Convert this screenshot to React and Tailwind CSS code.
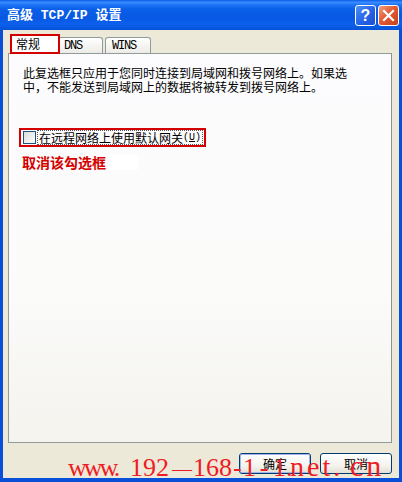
import React from "react";

function TitleButton({ kind }) {
    if (kind === "help") {
        return (
            <div className="w-[21px] h-[21px] rounded-[3px] border border-white bg-[linear-gradient(135deg,#4f8ff7_0%,#2563e8_55%,#1a4fd0_100%)] flex items-center justify-center">
                <span className="text-white font-bold text-[16px] leading-none font-['Liberation_Sans',sans-serif]">?</span>
            </div>
        );
    }
    return (
        <div className="w-[21px] h-[21px] rounded-[3px] border border-white bg-[linear-gradient(135deg,#f0a080_0%,#e35a33_45%,#c8401c_100%)] flex items-center justify-center">
            <svg width="13" height="13" viewBox="0 0 13 13">
                <path d="M2 2 L11 11 M11 2 L2 11" stroke="#fff" strokeWidth="2.2" strokeLinecap="square" />
            </svg>
        </div>
    );
}

function Button({ label, isDefault }) {
    return (
        <div className="w-[72px] h-[21px] rounded-[3px] border border-[#003c74] bg-[linear-gradient(to_bottom,#ffffff_0%,#f4f3ee_60%,#e3e0d6_100%)] flex items-center justify-center">
            <div className={"w-full h-full rounded-[2px] flex items-center justify-center " + (isDefault ? "border border-[#a0b8e8]" : "")}>
                <span className="text-[12px] leading-none text-black font-['Noto_Sans_CJK_SC',sans-serif]">{label}</span>
            </div>
        </div>
    );
}

export default function App() {
    return (
        <div className="relative w-[402px] h-[482px] bg-[#0a4fd8] flex flex-col overflow-hidden">
            {/* title bar */}
            <div className="h-[30px] flex items-center justify-between pl-[7px] pr-[3px] bg-[linear-gradient(to_bottom,#0a5ce8_0%,#3a8cff_8%,#1c74f6_16%,#0a5fe8_30%,#0858e4_60%,#0b60ec_80%,#0652d8_100%)]">
                <span className="text-white font-bold text-[13px] leading-none font-['Liberation_Mono','Noto_Sans_CJK_SC',monospace]">
                    高级 TCP/IP 设置
                </span>
                <div className="flex gap-[2px] mt-[1px]">
                    <TitleButton kind="help" />
                    <TitleButton kind="close" />
                </div>
            </div>

            {/* body */}
            <div className="flex-1 mx-[3px] mb-[4px] bg-[#ece9d8] flex flex-col pl-[5px] pr-[7px] pt-[3px]">
                {/* tabs */}
                <div className="h-[20px] flex items-end pl-[2px]">
                    <div className="w-[50px] h-[20px] border-2 border-[#d40000] bg-white flex items-center pl-[4px] z-10 -mb-[1px]">
                        <span className="text-[12px] leading-none text-black font-['Noto_Sans_CJK_SC',sans-serif]">常规</span>
                    </div>
                    <div className="w-[45px] h-[16px] -ml-[2px] border border-b-0 border-[#919b9c] rounded-t-[3px] bg-[linear-gradient(to_bottom,#ffffff,#ecebe6)] flex items-center pl-[5px]">
                        <span className="text-[12px] leading-none tracking-[-1.2px] text-black font-['Liberation_Mono',monospace]">DNS</span>
                    </div>
                    <div className="w-[46px] h-[16px] ml-[2px] border border-b-0 border-[#919b9c] rounded-t-[3px] bg-[linear-gradient(to_bottom,#ffffff,#ecebe6)] flex items-center pl-[6px]">
                        <span className="text-[12px] leading-none tracking-[-1.2px] text-black font-['Liberation_Mono',monospace]">WINS</span>
                    </div>
                </div>

                {/* panel */}
                <div className="h-[390px] border border-[#919b9c] border-r-[#8a9294] bg-[linear-gradient(to_bottom,#fcfcfe_0%,#fbfbfa_60%,#f4f3ee_100%)] pl-[14px] pt-[12px] flex flex-col items-start font-['Noto_Sans_CJK_SC',sans-serif]">
                    <p className="text-[12px] leading-[14px] text-black whitespace-nowrap">
                        此复选框只应用于您同时连接到局域网和拨号网络上。如果选
                        <br />
                        中，不能发送到局域网上的数据将被转发到拨号网络上。
                    </p>

                    <div className="mt-[34px] -ml-[4px] h-[19px] border-2 border-[#d40000] flex items-center pl-[2px] pr-[1px]">
                        <div className="w-[13px] h-[13px] shrink-0 border border-[#1c5180] bg-[linear-gradient(135deg,#dcdcd7,#ffffff)]" />
                        <div className="ml-[1px] h-[15px] border border-dotted border-[#555] flex items-center px-[1px] whitespace-nowrap">
                            <span className="text-[12px] leading-none text-black">在远程网络上使用默认网关</span>
                            <span className="text-[10px] leading-none text-black font-['Liberation_Mono',monospace]">
                                (<span className="underline">U</span>)
                            </span>
                        </div>
                    </div>

                    <div className="mt-[7px] -ml-[1px] flex items-center">
                        <span className="text-[14px] leading-[16px] font-bold text-[#d40000] whitespace-nowrap">取消该勾选框</span>
                        <div className="ml-[2px] w-[30px] h-[15px] bg-white" />
                    </div>
                </div>

                {/* buttons */}
                <div className="mt-[10px] flex justify-end gap-[9px]">
                    <Button label="确定" isDefault />
                    <Button label="取消" />
                </div>
            </div>

            {/* watermark */}
            <div className="absolute left-[68px] top-[453px] flex items-baseline text-[26px] leading-[26px] text-[#ee1c25] whitespace-nowrap font-['Liberation_Serif',serif]">
                <span className="w-[62px] tracking-[-3px]">www.</span>
                <span className="w-[41px]">192</span>
                <span className="w-[22px] text-[20px] text-center">—</span>
                <span className="w-[40px]">168</span>
                <span className="w-[10px]">-</span>
                <span className="w-[12px]">1</span>
                <span className="w-[18px] text-center">-</span>
                <span className="w-[17px]">1.</span>
                <span className="w-[60px] text-[28px] tracking-[3px]">net.</span>
                <span className="w-[48px] text-[30px] tracking-[3px]">cn</span>
            </div>
        </div>
    );
}
